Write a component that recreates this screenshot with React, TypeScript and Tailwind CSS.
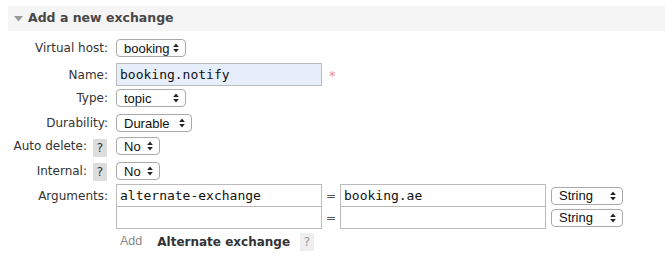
const SelectBox = ({ value, width }: { value: string; width: string }) => {
  return (
    <div
      className={`${width} h-[18px] flex items-center justify-between pl-[7px] pr-[6px] bg-white border border-[#a9a9a9] rounded-[4px] text-[13px] text-[#111] font-['Liberation_Sans',sans-serif] leading-none`}
    >
      <span>{value}</span>
      <svg width="6" height="10" viewBox="0 0 6 10" className="shrink-0">
        <path d="M3 0.5 L5.8 4 L0.2 4 Z" fill="#222" />
        <path d="M3 9.5 L5.8 6 L0.2 6 Z" fill="#222" />
      </svg>
    </div>
  );
};

const Help = ({ faded }: { faded?: boolean }) => {
  return (
    <span
      className={
        faded
          ? 'inline-flex items-center justify-center w-[14px] h-[18px] bg-[#eeeeee] text-[#999] text-[12px]'
          : 'inline-flex items-center justify-center w-[14px] h-[18px] bg-[#dddddd] text-[#333] text-[12px]'
      }
    >
      ?
    </span>
  );
};

const Label = ({ children }: { children: React.ReactNode }) => {
  return (
    <div className="w-[108px] shrink-0 flex items-center justify-end gap-[6px] text-[12px] text-[#333]">
      {children}
    </div>
  );
};

export default function App() {
  const mono = "font-['DejaVu_Sans_Mono',monospace] text-[13px] text-[#111]";
  return (
    <div className="w-[665px] h-[260px] bg-white font-['DejaVu_Sans',Verdana,sans-serif] overflow-hidden">
      <div className="mt-[6px] ml-[8px] h-[25px] bg-[#f5f5f5] flex items-center">
        <svg width="9" height="6" viewBox="0 0 9 6" className="ml-[6px] mr-[5px]">
          <path d="M0 0 L9 0 L4.5 5.5 Z" fill="#9a9a9a" />
        </svg>
        <h2 className="text-[12.5px] font-bold text-[#484848]">Add a new exchange</h2>
      </div>

      <div className="flex flex-col">
        <div className="flex gap-[8px] h-[18px] mt-[8px]">
          <Label>Virtual host:</Label>
          <SelectBox value="booking" width="w-[70px]" />
        </div>

        <div className="flex gap-[8px] h-[23px] mt-[6px]">
          <Label>Name:</Label>
          <div className="flex items-start">
            <div className={`w-[206px] h-[23px] border border-[#bbbbbb] bg-[#e6eefc] flex items-center pl-[3px] ${mono}`}>
              booking.notify
            </div>
            <span className="ml-[7px] mt-[3px] text-[#f08a8a] text-[13px]">*</span>
          </div>
        </div>

        <div className="flex gap-[8px] h-[18px] mt-[3px]">
          <Label>Type:</Label>
          <SelectBox value="topic" width="w-[70px]" />
        </div>

        <div className="flex gap-[8px] h-[18px] mt-[7px]">
          <Label>Durability:</Label>
          <SelectBox value="Durable" width="w-[76px]" />
        </div>

        <div className="flex gap-[8px] h-[18px] mt-[5px]">
          <Label>
            <span>Auto delete:</span>
            <span className="mt-[3px] mr-[1px]"><Help /></span>
          </Label>
          <SelectBox value="No" width="w-[44px]" />
        </div>

        <div className="flex gap-[8px] h-[18px] mt-[7px]">
          <Label>
            <span>Internal:</span>
            <span className="mt-[2px] mr-[1px]"><Help /></span>
          </Label>
          <SelectBox value="No" width="w-[44px]" />
        </div>

        <div className="flex gap-[8px] mt-[4px]">
          <div className="w-[108px] shrink-0 h-[23px] flex items-center justify-end text-[12px] text-[#333]">
            Arguments:
          </div>
          <div className="flex flex-col">
            <div className="flex items-center h-[23px]">
              <div className={`w-[206px] h-[23px] border border-[#bbbbbb] bg-white flex items-center pl-[3px] ${mono}`}>
                alternate-exchange
              </div>
              <span className="w-[18px] text-center text-[12px] text-[#555]">=</span>
              <div className={`w-[206px] h-[23px] border border-[#bbbbbb] bg-white flex items-center pl-[3px] ${mono}`}>
                booking.ae
              </div>
              <div className="ml-[5px]">
                <SelectBox value="String" width="w-[72px]" />
              </div>
            </div>
            <div className="flex items-center h-[23px] -mt-px">
              <div className="w-[206px] h-[23px] border border-[#bbbbbb] bg-white" />
              <span className="w-[18px] text-center text-[12px] text-[#555]">=</span>
              <div className="w-[206px] h-[23px] border border-[#bbbbbb] bg-white" />
              <div className="ml-[5px]">
                <SelectBox value="String" width="w-[72px]" />
              </div>
            </div>
          </div>
        </div>

        <div className="flex items-center h-[18px] mt-[4px] pl-[120px] text-[12px]">
          <span className="text-[#888] font-['Liberation_Sans',sans-serif] text-[12.5px] -mt-[2px]">Add</span>
          <span className="ml-[15px] font-bold text-[#333]">Alternate exchange</span>
          <span className="ml-[10px]"><Help faded /></span>
        </div>
      </div>
    </div>
  );
}
